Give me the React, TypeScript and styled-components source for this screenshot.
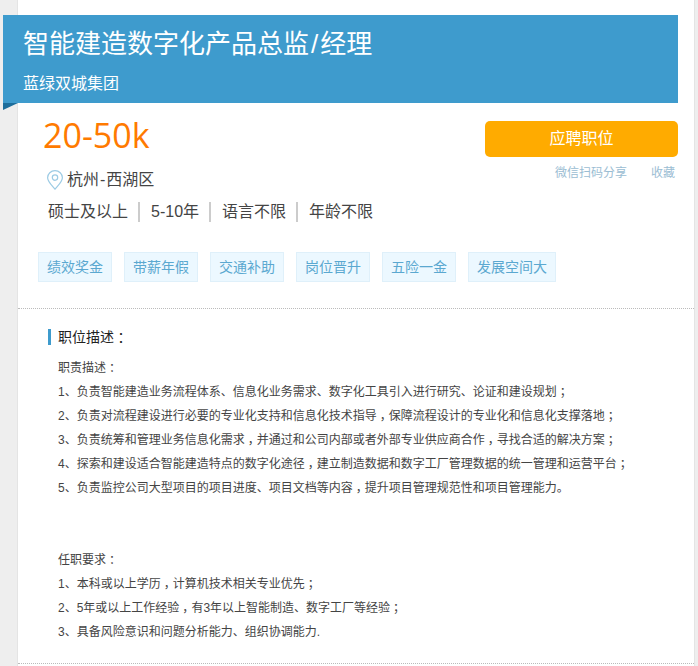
import React from 'react'
import styled, {createGlobalStyle} from 'styled-components'

const tags = ['绩效奖金', '带薪年假', '交通补助', '岗位晋升', '五险一金', '发展空间大']

const duties = [
    '职责描述：',
    '1、负责智能建造业务流程体系、信息化业务需求、数字化工具引入进行研究、论证和建设规划；',
    '2、负责对流程建设进行必要的专业化支持和信息化技术指导，保障流程设计的专业化和信息化支撑落地；',
    '3、负责统筹和管理业务信息化需求，并通过和公司内部或者外部专业供应商合作，寻找合适的解决方案；',
    '4、探索和建设适合智能建造特点的数字化途径，建立制造数据和数字工厂管理数据的统一管理和运营平台；',
    '5、负责监控公司大型项目的项目进度、项目文档等内容，提升项目管理规范性和项目管理能力。',
    '',
    '',
    '任职要求：',
    '1、本科或以上学历，计算机技术相关专业优先；',
    '2、5年或以上工作经验，有3年以上智能制造、数字工厂等经验；',
    '3、具备风险意识和问题分析能力、组织协调能力.',
]

// the reference font centres ，：； in their cell
const withPunct = (text: string) =>
    text.split(/([，：；])/).map((part, i) =>
        i % 2 ? <Punct key={i}>{part}</Punct> : part
    )

export default function App() {
    return (
        <>
            <GlobalStyle />
            <Card>
                <Banner>
                    <Title>智能建造数字化产品总监<WideMark $pad={2}>/</WideMark>经理</Title>
                    <Company>蓝绿双城集团</Company>
                </Banner>
                <Summary>
                    <div>
                        <Salary>20-50k</Salary>
                        <Location>
                            <svg width="18" height="20" viewBox="0 0 18 20" fill="none" stroke="#9ccbe4" strokeWidth="1.2">
                                <path d="M9 19.2C5.5 15 1.6 11.6 1.6 7.8a7.4 7.1 0 0 1 14.8 0C16.4 11.6 12.5 15 9 19.2Z" />
                                <circle cx="9" cy="7.6" r="2.7" />
                            </svg>
                            <span>杭州<WideMark $pad={1}>-</WideMark>西湖区</span>
                        </Location>
                        <Requirements>
                            <Requirement>硕士及以上</Requirement>
                            <Requirement>5-10年</Requirement>
                            <Requirement>语言不限</Requirement>
                            <Requirement>年龄不限</Requirement>
                        </Requirements>
                    </div>
                    <Actions>
                        <ApplyButton>应聘职位</ApplyButton>
                        <ActionLinks>
                            <span>微信扫码分享</span>
                            <span>收藏</span>
                        </ActionLinks>
                    </Actions>
                </Summary>
                <Tags>
                    {tags.map(tag => <Tag key={tag}>{tag}</Tag>)}
                </Tags>
                <Description>
                    <SectionTitle>{withPunct('职位描述：')}</SectionTitle>
                    <Lines>
                        {duties.map((line, i) => <Line key={i}>{withPunct(line)}</Line>)}
                    </Lines>
                </Description>
            </Card>
        </>
    )
}

const GlobalStyle = createGlobalStyle`
html, body {
  margin: 0;
  background: #eeeeee;
  font-family: "Liberation Sans", "Noto Sans CJK SC", sans-serif;
}
`

const Card = styled.div`
  box-sizing: border-box;
  width: 678px;
  height: 666px;
  margin-left: 17px;
  padding-top: 15px;
  background: #fff;
  border-left: 1px solid #e4e4e4;
  border-right: 1px solid #e4e4e4;
`

const Banner = styled.div`
  position: relative;
  box-sizing: border-box;
  width: 675px;
  height: 88px;
  margin-left: -15px;
  padding: 12px 20px 0;
  background: #3e9bcd;
  color: #fff;

  &::after {
    content: '';
    position: absolute;
    left: 0;
    top: 88px;
    border-top: 7px solid #1d6e9c;
    border-left: 15px solid transparent;
    transform: scaleX(-1);
  }
`

const Title = styled.div`
  font-size: 26px;
  line-height: 34px;
`

const WideMark = styled.span<{$pad: number}>`
  padding: 0 ${p => p.$pad}px;
`

const Company = styled.div`
  margin-top: 13px;
  font-size: 16px;
  line-height: 20px;
`

const Summary = styled.div`
  display: flex;
  justify-content: space-between;
  padding: 0 16px 0 25px;
`

const Salary = styled.div`
  font-family: "Open Sans", sans-serif;
  font-size: 34px;
  line-height: 36px;
  margin-top: 14px;
  color: #ff7a00;
`

const Location = styled.div`
  display: flex;
  align-items: center;
  gap: 3px;
  margin-top: 15px;
  margin-left: 3px;
  font-size: 16px;
  line-height: 24px;
  color: #444;
`

const Requirements = styled.div`
  display: flex;
  margin-top: 10px;
  margin-left: 5px;
`

const Requirement = styled.span`
  padding-right: 10px;
  margin-right: 11px;
  font-size: 16px;
  line-height: 20px;
  color: #444;
  border-right: 2px solid #ccc;

  &:last-child {
    border-right: 0;
  }
`

const Actions = styled.div`
  width: 193px;
  margin-top: 18px;
`

const ApplyButton = styled.div`
  height: 36px;
  border-radius: 5px;
  background: #ffab00;
  color: #fff;
  font-size: 16px;
  line-height: 36px;
  text-align: center;
`

const ActionLinks = styled.div`
  display: flex;
  justify-content: flex-end;
  gap: 24px;
  padding-right: 3px;
  margin-top: 8px;
  font-size: 12px;
  line-height: 16px;
  color: #9bbdd3;
`

const Tags = styled.div`
  display: flex;
  gap: 12px;
  height: 56px;
  margin-top: 30px;
  padding: 0 20px;
  border-bottom: 1px dotted #bbb;
`

const Tag = styled.span`
  box-sizing: border-box;
  height: 30px;
  padding: 0 8px;
  background: #ecf8ff;
  border: 1px solid #dff0fa;
  color: #5ba8d0;
  font-size: 14px;
  line-height: 28px;
`

const Description = styled.div`
  height: 355px;
  box-sizing: border-box;
  padding: 20px 0 0 30px;
  border-bottom: 1px dotted #bbb;
`

const SectionTitle = styled.div`
  height: 16px;
  padding-left: 7px;
  border-left: 3px solid #3e9bcd;
  color: #222;
  font-size: 14px;
  line-height: 16px;
`

const Lines = styled.div`
  margin-top: 11px;
  padding-left: 10px;
`

const Line = styled.div`
  height: 24px;
  font-size: 12px;
  line-height: 24px;
  color: #444;
`

const Punct = styled.span`
  font-feature-settings: "halt";
  padding: 0 0.25em;
`
